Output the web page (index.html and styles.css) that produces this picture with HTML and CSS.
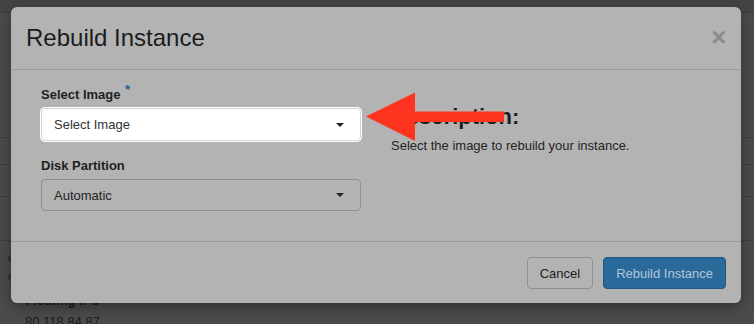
FILE: index.html
```html
<!DOCTYPE html>
<html lang="en">
<head>
    <meta charset="UTF-8">
    <meta name="viewport" content="width=device-width, initial-scale=1.0">
    <title>Rebuild Instance</title>
    <link rel="stylesheet" href="styles.css">
</head>
<body>
    <div class="page">
        <div class="topbar"></div>
        <div class="bg-row bg-row-a"></div>
        <div class="bg-row bg-row-b"></div>
        <div class="bg-row bg-row-c"></div>
        <div class="bg-row bg-row-d"></div>
        <div class="bg-details">
            <div class="bg-line">cr</div>
            <div class="bg-line">cr</div>
            <div class="bg-title">Floating IPs</div>
            <div class="bg-value">80.118.84.87</div>
        </div>
    </div>

    <div class="modal">
        <div class="modal-header">
            <h4 class="modal-title">Rebuild Instance</h4>
            <span class="close">&times;</span>
        </div>
        <div class="modal-body">
            <div class="col-left">
                <div class="form-group">
                    <label class="field-label">Select Image <span class="required">*</span></label>
                    <div class="select select-highlight">
                        <span>Select Image</span>
                        <span class="caret"></span>
                    </div>
                </div>
                <div class="form-group">
                    <label class="field-label">Disk Partition</label>
                    <div class="select">
                        <span>Automatic</span>
                        <span class="caret"></span>
                    </div>
                </div>
            </div>
            <div class="col-right">
                <h3 class="desc-title">Description:</h3>
                <p class="desc-text">Select the image to rebuild your instance.</p>
            </div>
        </div>
        <div class="modal-footer">
            <button class="btn btn-default" type="button">Cancel</button>
            <button class="btn btn-primary" type="button">Rebuild Instance</button>
        </div>
    </div>

    <svg class="arrow" width="140" height="50" viewBox="0 0 140 50" xmlns="http://www.w3.org/2000/svg">
        <path d="M0 24.5L49 0.5V19.5H138V30H49V49Z" fill="#fe3421"/>
    </svg>
</body>
</html>
```

FILE: styles.css
```css
:root {
    --backdrop: #4b4b4b;
    --backdrop-line: #3e3e3e;
    --modal-bg: #b3b3b3;
    --modal-line: #9c9c9c;
    --text: #222222;
    --muted-border: #8f8f8f;
    --primary: #2a6a9b;
    --primary-dark: #215683;
    --primary-text: #b0c6d8;
}
* {
    box-sizing: border-box;
}
body {
    margin: 0;
    font-family: 'Liberation Sans', Arial, Helvetica, sans-serif;
    background: var(--backdrop);
    width: 754px;
    height: 324px;
    overflow: hidden;
    position: relative;
}
.page {
    height: 324px;
    overflow: hidden;
}
.topbar {
    height: 13px;
    background: #444444;
    border-bottom: 1px solid var(--backdrop-line);
}
.bg-row {
    border-bottom: 1px solid var(--backdrop-line);
}
.bg-row-a { height: 125px; }
.bg-row-b { height: 27px; }
.bg-row-c { height: 32px; }
.bg-row-d { height: 44px; }
.bg-details {
    color: #1c1c1c;
    font-size: 13px;
    line-height: 19px;
    padding-top: 7px;
}
.bg-line {
    padding-left: 8px;
}
.bg-title {
    padding-left: 25px;
    margin-top: 5px;
    font-weight: 700;
}
.bg-value {
    padding-left: 25px;
    margin-top: 2px;
}

/* modal dialog sitting over the page */
.modal {
    position: absolute;
    top: 7px;
    left: 11px;
    width: 730px;
    background: var(--modal-bg);
    border-radius: 6px;
    box-shadow: 0 4px 14px rgba(0,0,0,0.35);
    color: var(--text);
}
.modal-header {
    display: flex;
    justify-content: space-between;
    align-items: flex-start;
    padding: 18px 15px;
    border-bottom: 1px solid var(--modal-line);
}
.modal-title {
    margin: 0;
    font-size: 24px;
    font-weight: 400;
    line-height: 26px;
    color: #1c1c1c;
}
.close {
    font-size: 25px;
    font-weight: 700;
    line-height: 20px;
    color: #8a8a8a;
    margin-top: 2px;
    margin-right: 0;
}
.modal-body {
    display: flex;
    gap: 30px;
    padding: 16px 30px 30px 30px;
}
.col-left {
    width: 320px;
    display: flex;
    flex-direction: column;
    gap: 16px;
}
.col-right {
    flex: 1;
}
.field-label {
    display: block;
    font-size: 13px;
    font-weight: 700;
    line-height: 18px;
    margin-bottom: 4px;
    color: #1f1f1f;
}
.required {
    color: #1f5f93;
    font-size: 13px;
    position: relative;
    top: -5px;
    margin-left: 1px;
}
.select {
    display: flex;
    align-items: center;
    justify-content: space-between;
    height: 32px;
    padding: 0 16px 0 12px;
    font-size: 13px;
    color: #242424;
    border: 1px solid var(--muted-border);
    border-radius: 4px;
}
.select-highlight {
    height: 33px;
    background: #ffffff;
    border-color: #d2d2d2;
    color: #333333;
    box-shadow: 0 0 0 1px #ffffff;
}
.caret {
    width: 0;
    height: 0;
    border-left: 4px solid transparent;
    border-right: 4px solid transparent;
    border-top: 4px solid #222222;
}
.desc-title {
    margin: 19px 0 8px 0;
    font-size: 22px;
    font-weight: 700;
    line-height: 24px;
    color: #1f1f1f;
}
.desc-text {
    margin: 0;
    font-size: 13px;
    line-height: 18px;
    color: #242424;
}
.modal-footer {
    display: flex;
    justify-content: flex-end;
    gap: 10px;
    padding: 15px 15px 14px 15px;
    border-top: 1px solid var(--modal-line);
}
.btn {
    height: 32px;
    padding: 0 12px;
    font-family: inherit;
    font-size: 13px;
    border-radius: 4px;
    border: 1px solid var(--muted-border);
    background: var(--modal-bg);
    color: #222222;
}
.btn-primary {
    background: var(--primary);
    border-color: var(--primary-dark);
    color: var(--primary-text);
}

/* annotation arrow */
.arrow {
    position: absolute;
    left: 366px;
    top: 92px;
}
```
